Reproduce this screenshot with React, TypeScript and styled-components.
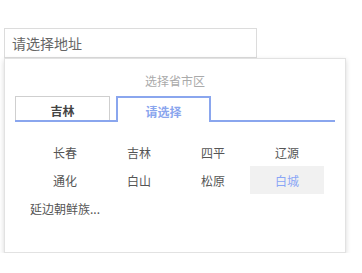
import styled, { createGlobalStyle } from 'styled-components';

const GlobalStyle = createGlobalStyle`
  body {
    margin: 0;
    background: #fff;
    font-family: "Noto Sans CJK SC", "Noto Sans", sans-serif;
  }
`;

const Page = styled.div`
  padding: 28px 0 0 4px;
`;

const AddressInput = styled.div`
  box-sizing: border-box;
  width: 253px;
  height: 30px;
  border: 1px solid #dcdcdc;
  padding: 0 7px;
  display: flex;
  align-items: center;
  font-size: 14px;
  color: #666;
`;

const Dropdown = styled.div`
  box-sizing: border-box;
  width: 342px;
  height: 195px;
  border: 1px solid #e2e2e2;
  background: #fff;
  box-shadow: 0 2px 5px rgba(0, 0, 0, 0.16);
  padding: 14px 10px 0 10px;
`;

const Title = styled.div`
  text-align: center;
  font-size: 12px;
  line-height: 16px;
  color: #aaa;
`;

const TabBar = styled.div`
  display: flex;
  gap: 6px;
  margin-top: 7px;
  border-bottom: 2px solid #8aa6ee;
`;

const Tab = styled.div<{ $active?: boolean }>`
  box-sizing: border-box;
  width: 95px;
  display: flex;
  justify-content: center;
  align-items: center;
  font-size: 12px;
  font-weight: bold;
  background: #fff;
  padding-top: 3px;
  ${(p) =>
    p.$active
      ? `
    height: 26px;
    margin-bottom: -2px;
    border: 2px solid #8aa6ee;
    border-bottom: none;
    color: #8aa6ee;
    position: relative;
  `
      : `
    height: 24px;
    border: 1px solid #cfcfcf;
    border-bottom: none;
    color: #444;
  `}
`;

const Grid = styled.div`
  display: grid;
  grid-template-columns: repeat(4, 74px);
  grid-auto-rows: 28px;
  margin: 16px 0 0 13px;
`;

const Cell = styled.div<{ $selected?: boolean }>`
  display: flex;
  align-items: center;
  justify-content: center;
  font-size: 12px;
  color: ${(p) => (p.$selected ? '#8aa6f6' : '#555')};
  background: ${(p) => (p.$selected ? '#f1f1f1' : 'transparent')};
  white-space: nowrap;
  overflow: visible;
`;

const cities = ['长春', '吉林', '四平', '辽源', '通化', '白山', '松原', '白城', '延边朝鲜族...'];

export default function App() {
  return (
    <>
      <GlobalStyle />
      <Page>
        <AddressInput>请选择地址</AddressInput>
        <Dropdown>
          <Title>选择省市区</Title>
          <TabBar>
            <Tab>吉林</Tab>
            <Tab $active>请选择</Tab>
          </TabBar>
          <Grid>
            {cities.map((city) => (
              <Cell key={city} $selected={city === '白城'}>
                {city}
              </Cell>
            ))}
          </Grid>
        </Dropdown>
      </Page>
    </>
  );
}
